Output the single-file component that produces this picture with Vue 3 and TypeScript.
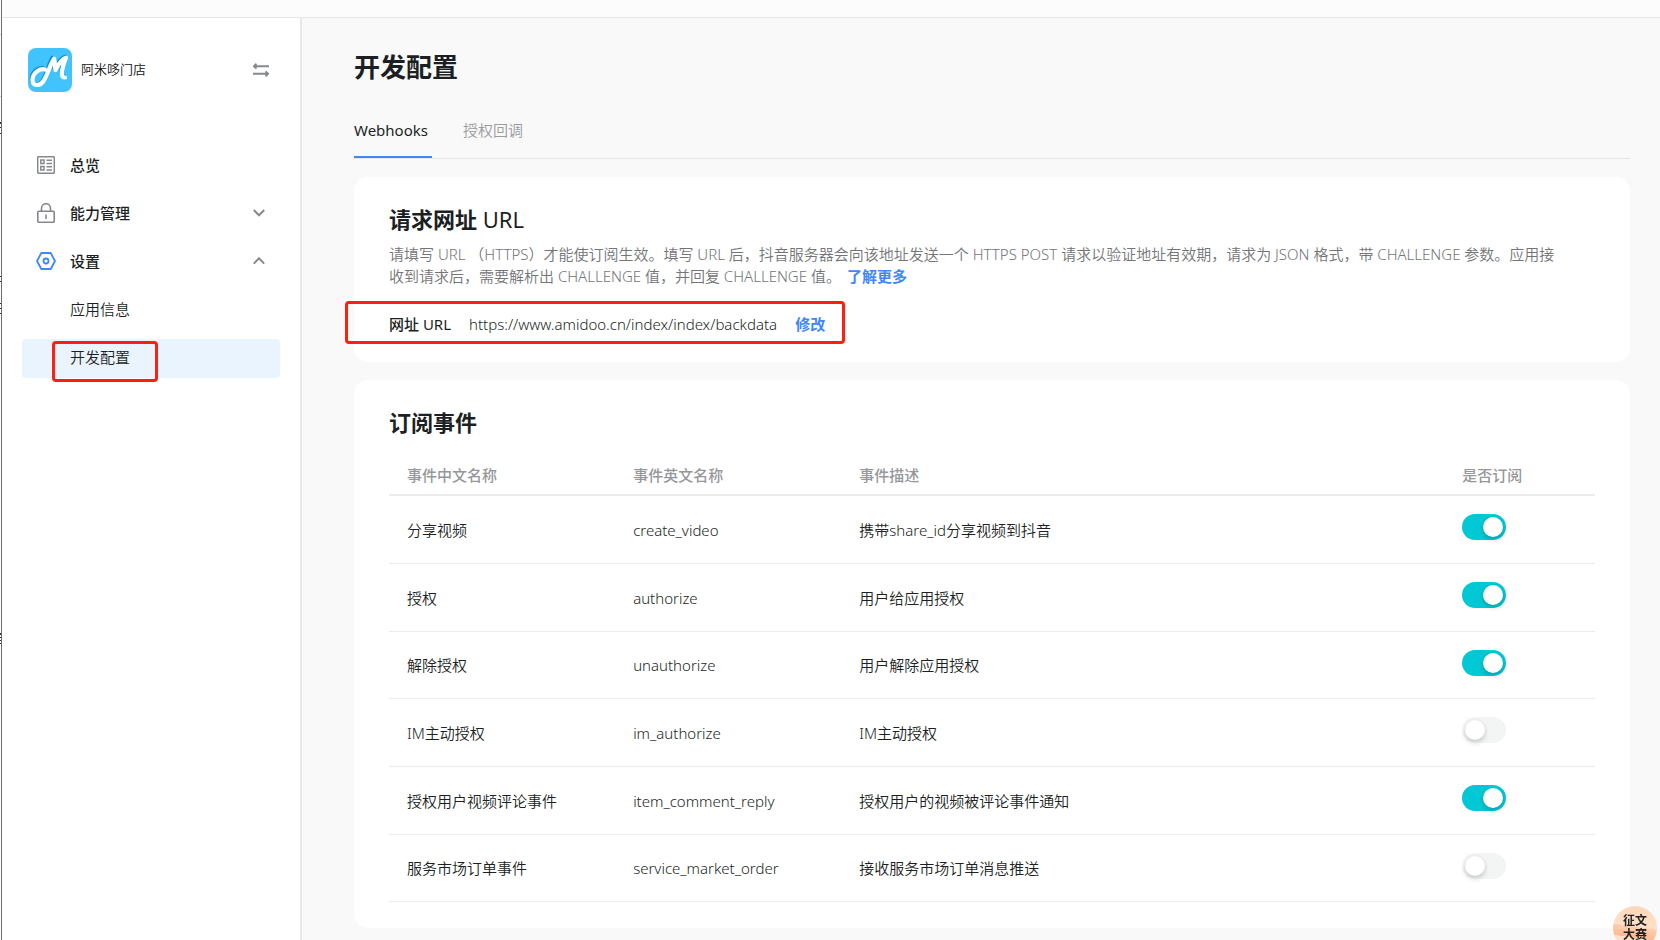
<script setup lang="ts">
import { ref } from 'vue'

interface EventRow {
  id: string
  name: string
  description: string
  subscribed: boolean
}

const events = ref<EventRow[]>([
  { name: '分享视频', id: 'create_video', description: '携带share_id分享视频到抖音', subscribed: true },
  { name: '授权', id: 'authorize', description: '用户给应用授权', subscribed: true },
  { name: '解除授权', id: 'unauthorize', description: '用户解除应用授权', subscribed: true },
  { name: 'IM主动授权', id: 'im_authorize', description: 'IM主动授权', subscribed: false },
  { name: '授权用户视频评论事件', id: 'item_comment_reply', description: '授权用户的视频被评论事件通知', subscribed: true },
  { name: '服务市场订单事件', id: 'service_market_order', description: '接收服务市场订单消息推送', subscribed: false },
])
</script>

<template>
  <div class="page">
    <div class="edge" aria-hidden="true">
      <svg width="1" height="660" viewBox="0 0 1 660" shape-rendering="crispEdges">
        <path d="M0 34h1v1H0zM0 96h1v1H0z" fill="#d0d0d0" />
        <path d="M0 122h1v2H0zM0 127h1v1H0zM0 133h1v1H0zM0 276h1v1H0zM0 281h1v1H0zM0 303h1v1H0zM0 308h1v1H0zM0 313h1v1H0zM0 633h1v2H0zM0 637h1v1H0zM0 640h1v1H0zM0 643h1v1H0z" fill="#333" />
      </svg>
    </div>
    <div class="shell">
      <header class="topbar"></header>
      <div class="body">
        <aside class="sidebar">
          <div class="brand">
            <svg class="logo" viewBox="0 0 44 44" aria-hidden="true">
              <rect width="44" height="44" rx="8" fill="#41c3fd" />
              <g fill="none" stroke-linecap="round" stroke-linejoin="round">
                <path d="M15.500 20C10 18.500 3.500 24 3.500 31c0 6 7 7 10.500 2C18.500 27 20 17 24.300 9.500c1.500 3.500 1.200 7.500 2 11C28.500 16.500 32 10 37 8.600 34.500 15 30 28 36.500 28.300" stroke="#148fc9" stroke-width="3.600" />
                <path d="M17 21.500C11.500 20 4.500 25 4.500 32c0 6.500 7.500 6.500 11 1C20 26.500 21.500 17.500 26 10.800c1.200 3.500.8 7.500 1.500 11.200C29.500 18 33.500 11.300 38 9.800 35.500 16 30.500 29.800 37 29.500" stroke="#fff" stroke-width="4.200" />
              </g>
            </svg>
            <span class="brand-name">阿米哆门店</span>
            <button class="swap" type="button" aria-label="切换">
              <svg viewBox="0 0 16 14" width="16" height="14">
                <path d="M3.500 .8.800 3.200l2.700 2.400M1 3.200h15M12.500 8.400l2.700 2.400-2.700 2.400M15 10.800H0" fill="none" stroke="#85898e" stroke-width="1.900" />
              </svg>
            </button>
          </div>

          <nav class="menu">
            <a class="item" href="#overview">
              <svg class="icon" viewBox="0 0 18 18">
                <g fill="none" stroke="#85898e" stroke-width="1.500">
                  <rect x=".7" y=".7" width="16.600" height="16.600" rx="1" />
                  <rect x="3.800" y="4" width="3.200" height="3.500" />
                  <rect x="3.800" y="10.500" width="3.200" height="3.500" />
                  <path d="M9.500 4.300H15M9.500 7.500H15M9.500 10.800H15M9.500 14H15" />
                </g>
              </svg>
              <span>总览</span>
            </a>
            <button class="item" type="button" aria-expanded="false">
              <svg class="icon" viewBox="0 0 18 20">
                <g fill="none" stroke="#85898e" stroke-width="1.600">
                  <rect x=".8" y="8.300" width="16.400" height="11" rx="1" />
                  <path d="M4.500 8.300V5.500a4.500 4.800 0 0 1 9 0v2.800M9 11.500v4.500" />
                </g>
              </svg>
              <span>能力管理</span>
              <svg class="chevron" viewBox="0 0 12 8"><path d="M.8 1 6 6.300 11.200 1" /></svg>
            </button>
            <button class="item" type="button" aria-expanded="true">
              <svg class="icon wide" viewBox="0 0 20 18">
                <g fill="none" stroke="#3d87fb" stroke-width="1.800">
                  <path d="M5.300 1h9.400L19 9l-4.300 8H5.300L1 9z" stroke-linejoin="round" />
                  <circle cx="10" cy="9" r="2.500" />
                </g>
              </svg>
              <span>设置</span>
              <svg class="chevron" viewBox="0 0 12 8"><path d="M.8 6.600 6 1.300l5.200 5.300" /></svg>
            </button>
            <a class="item sub" href="#info">应用信息</a>
            <a class="item sub active" href="#config" aria-current="page">
              开发配置
              <i class="mark mark-nav"></i>
            </a>
          </nav>
        </aside>

        <main class="content">
          <h1>开发配置</h1>
          <div class="tabs" role="tablist">
            <button class="tab selected" type="button" role="tab" aria-selected="true">Webhooks</button>
            <button class="tab" type="button" role="tab" aria-selected="false">授权回调</button>
          </div>

          <section class="card">
            <h2>请求网址 <span class="latin">URL</span></h2>
            <p class="desc">
              请填写 URL （HTTPS）才能使订阅生效。填写 URL 后，抖音服务器会向该地址发送一个 HTTPS POST 请求以验证地址有效期，请求为 JSON 格式，带 CHALLENGE 参数。应用接收到请求后，需要解析出 CHALLENGE 值，并回复 CHALLENGE 值。<a href="#more">了解更多</a>
            </p>
            <div class="url-row">
              <span class="url-label">网址 <span class="latin">URL</span></span>
              <span class="url">https://www.amidoo.cn/index/index/backdata</span>
              <button class="link" type="button">修改</button>
              <i class="mark mark-url"></i>
            </div>
          </section>

          <section class="card events">
            <h2>订阅事件</h2>
            <table>
              <colgroup>
                <col class="c-name" />
                <col class="c-name" />
                <col class="c-desc" />
                <col />
              </colgroup>
              <thead>
                <tr>
                  <th scope="col">事件中文名称</th>
                  <th scope="col">事件英文名称</th>
                  <th scope="col">事件描述</th>
                  <th scope="col">是否订阅</th>
                </tr>
              </thead>
              <tbody>
                <tr v-for="event in events" :key="event.id">
                  <td>{{ event.name }}</td>
                  <td>{{ event.id }}</td>
                  <td>{{ event.description }}</td>
                  <td class="toggle-cell">
                    <input v-model="event.subscribed" class="switch" type="checkbox" role="switch" :aria-label="event.name" />
                  </td>
                </tr>
              </tbody>
            </table>
          </section>
        </main>
      </div>
    </div>

    <button class="badge" type="button"><span>征文</span><span>大赛</span></button>
  </div>
</template>

<style>
body {
  margin: 0;
  overflow: hidden;
}
</style>

<style scoped>
.page {
  display: flex;
  min-height: 100vh;
  background: #fff;
  color: #1c1f23;
  font: 15px/22px "Noto Sans", "Noto Sans CJK SC", sans-serif;
}
.page * {
  box-sizing: border-box;
}
button {
  padding: 0;
  border: 0;
  background: none;
  color: inherit;
  font: inherit;
  cursor: pointer;
}
a {
  text-decoration: none;
}
svg {
  display: block;
}
.edge {
  flex: none;
  width: 2px;
  border-right: 1px solid #696b6e;
}
.shell {
  display: flex;
  flex: 1;
  flex-direction: column;
  min-width: 0;
}
.topbar {
  height: 18px;
  border-bottom: 1px solid #e8e8e8;
  background: #fcfcfc;
}
.body {
  display: flex;
  flex: 1;
}
.sidebar {
  flex: none;
  width: 300px;
  padding: 30px 20px 0;
  border-right: 2px solid #e8e8e8;
}
.brand {
  display: flex;
  align-items: center;
  gap: 9px;
  padding: 0 11px 0 6px;
}
.logo {
  width: 44px;
  height: 44px;
}
.brand-name {
  flex: 1;
  padding-bottom: 2px;
  color: #111;
  font-size: 13px;
  font-weight: 350;
}
.menu {
  display: flex;
  flex-direction: column;
  gap: 9px;
  margin-top: 55px;
}
.item {
  position: relative;
  display: flex;
  align-items: center;
  gap: 15px;
  height: 39px;
  padding: 0 15px 3px;
  border-radius: 4px;
  color: #1c1f23;
  font-weight: 500;
}
.icon {
  width: 18px;
}
.wide {
  width: 20px;
  margin: 0 -1px;
}
.chevron {
  width: 12px;
  margin-left: auto;
  fill: none;
  stroke: #85898e;
  stroke-width: 2;
}
.sub {
  padding-left: 48px;
  font-weight: 350;
}
.active {
  background: #eaf4ff;
}
.mark {
  position: absolute;
  border: 3px solid #ff1f10;
  border-radius: 4px;
  pointer-events: none;
}
.mark-nav {
  inset: 2px auto -4px 30px;
  width: 106px;
}
.content {
  flex: 1;
  min-width: 0;
  padding: 31px 30px 12px 52px;
  background: #f9f9f9;
}
h1,
h2,
p {
  margin: 0;
}
h1 {
  font-size: 26px;
  line-height: 36px;
}
.tabs {
  display: flex;
  gap: 31px;
  margin-top: 24px;
  border-bottom: 1px solid #e6e7e8;
}
.tab {
  height: 49px;
  padding-bottom: 5px;
  border-bottom: 2px solid transparent;
  color: #999b9d;
  font-weight: 350;
}
.selected {
  padding-right: 4px;
  border-color: #3d87fb;
  color: #1c1f23;
  font-weight: 400;
}
.card {
  margin-top: 18px;
  padding: 26px 35px 27px;
  border-radius: 14px;
  background: #fff;
}
h2 {
  font-size: 22px;
  line-height: 32px;
}
.latin {
  font-weight: 400;
}
.desc {
  margin-top: 8px;
  padding-right: 32px;
  color: #737577;
  font-weight: 350;
}
.desc a,
.link {
  color: #3d87fb;
  font-weight: 700;
}
.desc a {
  margin-left: 6px;
}
.url-row {
  position: relative;
  display: flex;
  gap: 18px;
  width: max-content;
  margin-top: 26px;
}
.url-label {
  font-weight: 500;
}
.url {
  font-weight: 350;
}
.mark-url {
  inset: -12px -20px -9px -44px;
}
.events {
  padding-bottom: 26px;
}
table {
  width: 100%;
  margin-top: 20px;
  border-collapse: separate;
  border-spacing: 0;
  table-layout: fixed;
}
.c-name {
  width: 18.75%;
}
.c-desc {
  width: 50%;
}
th,
td {
  padding: 0 0 0 18px;
  text-align: left;
}
th {
  height: 38px;
  padding-bottom: 2px;
  border-bottom: 2px solid #ececec;
  color: #95979a;
  font-weight: 500;
}
td {
  height: 68px;
  border-bottom: 1px solid #ececec;
  font-weight: 350;
}
tr:nth-child(3n) td {
  height: 67px;
}
td.toggle-cell {
  padding-bottom: 5px;
}
.switch {
  display: block;
  width: 44px;
  height: 26px;
  margin: 0;
  padding: 3px;
  border-radius: 13px;
  background: #f3f5f5;
  appearance: none;
}
.switch::before {
  display: block;
  width: 20px;
  height: 20px;
  border-radius: 50%;
  background: #fff;
  box-shadow: 0 3px 5px rgba(0, 0, 0, 0.16), 0 0 2px rgba(0, 0, 0, 0.1);
  content: "";
}
.switch:checked {
  background: #00c8d4;
}
.switch:checked::before {
  margin-left: 18px;
}
.badge {
  position: fixed;
  right: 3px;
  bottom: -10px;
  display: flex;
  flex-direction: column;
  align-items: center;
  width: 44px;
  height: 44px;
  padding-top: 8px;
  border-radius: 50%;
  background: linear-gradient(8deg, #ffe0c8 30%, #ffba93 31%, #ffcdae 52%, #ffe0c8 53%, #ffd5b5);
  color: #222;
  font-size: 12px;
  font-weight: 700;
  line-height: 14px;
}
</style>
